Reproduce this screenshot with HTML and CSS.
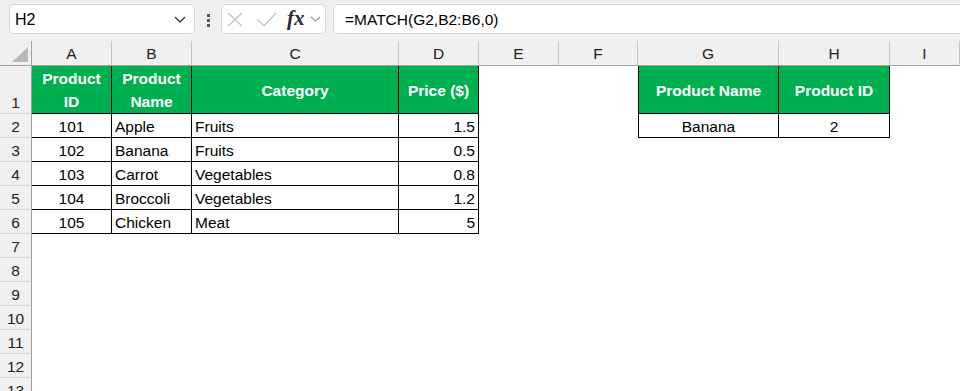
FILE: index.html
```html
<!DOCTYPE html>
<html lang="en">
<head>
  <meta charset="UTF-8" />
  <meta name="viewport" content="width=device-width, initial-scale=1.0"/>
  <title>MATCH lookup</title>
  <link rel="stylesheet" href="styles.css">
</head>
<body>

  <!-- Formula bar -->
  <div class="toolbar">
    <div class="name-box">
      <span>H2</span>
      <svg class="chev" width="12" height="7" viewBox="0 0 12 7"><path d="M1 1l5 5 5-5" fill="none" stroke="#333" stroke-width="1.3"/></svg>
    </div>
    <div class="dots"><i></i><i></i><i></i></div>
    <div class="fx-box">
      <svg class="cancel" width="16" height="15" viewBox="0 0 16 15"><path d="M1 1l14 13M15 1L1 14" stroke="#c2c2c2" stroke-width="1.2" fill="none"/></svg>
      <svg class="enter" width="21" height="15" viewBox="0 0 21 15"><path d="M1 7l7 7L20 1" stroke="#c2c2c2" stroke-width="1.2" fill="none"/></svg>
      <span class="fx">fx</span>
      <svg class="chev-sm" width="11" height="6" viewBox="0 0 11 6"><path d="M1 1l4.5 4 4.5-4" fill="none" stroke="#9a9a9a" stroke-width="1.1"/></svg>
    </div>
    <div class="formula">=MATCH(G2,B2:B6,0)</div>
  </div>

  <!-- Sheet -->
  <div class="sheet">
    <div class="row col-heads">
      <div class="corner"><svg width="16" height="15" viewBox="0 0 16 15"><path d="M16 0V15H0Z" fill="#b8b8b8"/></svg></div>
      <div>A</div><div>B</div><div>C</div><div>D</div><div>E</div><div>F</div><div>G</div><div>H</div><div>I</div>
    </div>

    <div class="row tall">
      <div class="rh">1</div>
      <div class="hd">Product ID</div>
      <div class="hd">Product Name</div>
      <div class="hd">Category</div>
      <div class="hd">Price ($)</div>
      <div></div><div></div>
      <div class="hd gl">Product Name</div>
      <div class="hd">Product ID</div>
    </div>

    <div class="row">
      <div class="rh">2</div>
      <div class="b ctr">101</div>
      <div class="b lt">Apple</div>
      <div class="b lt">Fruits</div>
      <div class="b rt">1.5</div>
      <div></div><div></div>
      <div class="b gl ctr">Banana</div>
      <div class="b ctr">2</div>
    </div>

    <div class="row">
      <div class="rh">3</div>
      <div class="b ctr">102</div>
      <div class="b lt">Banana</div>
      <div class="b lt">Fruits</div>
      <div class="b rt">0.5</div>
    </div>

    <div class="row">
      <div class="rh">4</div>
      <div class="b ctr">103</div>
      <div class="b lt">Carrot</div>
      <div class="b lt">Vegetables</div>
      <div class="b rt">0.8</div>
    </div>

    <div class="row">
      <div class="rh">5</div>
      <div class="b ctr">104</div>
      <div class="b lt">Broccoli</div>
      <div class="b lt">Vegetables</div>
      <div class="b rt">1.2</div>
    </div>

    <div class="row">
      <div class="rh">6</div>
      <div class="b ctr">105</div>
      <div class="b lt">Chicken</div>
      <div class="b lt">Meat</div>
      <div class="b rt">5</div>
    </div>

    <div class="row"><div class="rh">7</div></div>
    <div class="row"><div class="rh">8</div></div>
    <div class="row"><div class="rh">9</div></div>
    <div class="row"><div class="rh">10</div></div>
    <div class="row"><div class="rh">11</div></div>
    <div class="row"><div class="rh">12</div></div>
    <div class="row"><div class="rh">13</div></div>
  </div>

</body>
</html>
```

FILE: styles.css
```css
body {
  margin: 0;
  background-color: #fff;
  font-family: 'Liberation Sans', Arial, sans-serif;
  color: #000;
  overflow: hidden;
}

/* formula bar */
.toolbar {
  height: 41px;
  box-sizing: border-box;
  background-color: #f0f0f0;
  display: flex;
  align-items: flex-start;
  padding: 4px 0 0 9px;
}

.name-box {
  width: 186px;
  height: 30px;
  box-sizing: border-box;
  background-color: #fff;
  border: 1px solid #d6d6d6;
  border-radius: 5px;
  display: flex;
  align-items: center;
  justify-content: space-between;
  padding: 2px 8px 0 5px;
  font-size: 16px;
}

.name-box .chev {
  margin-top: -2px;
}

.dots {
  display: flex;
  flex-direction: column;
  gap: 2px;
  margin: 10px 0 0 12px;
}

.dots i {
  display: block;
  width: 3px;
  height: 3px;
  background-color: #555;
}

.fx-box {
  width: 105px;
  height: 30px;
  box-sizing: border-box;
  margin-left: 11px;
  background-color: #fff;
  border: 1px solid #d6d6d6;
  border-radius: 5px;
  display: flex;
  align-items: center;
  padding-left: 5px;
}

.fx-box .enter {
  margin-left: 13px;
}

.fx {
  margin-left: 10px;
  font-family: 'Liberation Serif', serif;
  font-style: italic;
  font-weight: bold;
  font-size: 21px;
  color: #2a2a2a;
  line-height: 1;
  margin-top: -2px;
}

.fx-box .chev-sm {
  margin-left: 5px;
}

.formula {
  flex: 1;
  height: 30px;
  box-sizing: border-box;
  margin: 0 -10px 0 7px;
  background-color: #fff;
  border: 1px solid #d6d6d6;
  border-radius: 5px 0 0 5px;
  padding: 6px 0 0 11px;
  font-size: 15.5px;
  line-height: 18px;
}

/* grid */
.row {
  display: grid;
  grid-template-columns: 32px 80px 80px 207px 80px 80px 79px 141px 111px 1fr;
  height: 24px;
}

.row.tall {
  height: 48px;
}

.row > div {
  box-sizing: border-box;
  display: flex;
  align-items: flex-end;
  line-height: 20px;
  font-size: 15.5px;
  white-space: nowrap;
  overflow: hidden;
}

.col-heads {
  height: 25px;
}

.col-heads > div {
  align-items: center;
  justify-content: center;
  padding-top: 2px;
  background-color: #f0f0f0;
  color: #222;
  border-right: 1px solid #c4c4c4;
  border-bottom: 1px solid #a0a0a0;
}

.col-heads .corner {
  align-items: flex-end;
  justify-content: flex-end;
  padding: 0 3px 3px 0;
  border-right-color: #a0a0a0;
}

.rh {
  justify-content: center;
  background-color: #f0f0f0;
  color: #222;
  border-right: 1px solid #a0a0a0;
  border-bottom: 1px solid #d4d4d4;
}

.row > .hd {
  align-items: center;
  justify-content: center;
  text-align: center;
  white-space: normal;
  line-height: 23px;
  padding: 1px 4px 0;
  background-color: #00b050;
  color: #fff;
  font-weight: bold;
  border-right: 1px solid #000;
  border-bottom: 1px solid #000;
}

.b {
  border-right: 1px solid #000;
  border-bottom: 1px solid #000;
}

.gl {
  border-left: 1px solid #000;
}

.ctr {
  justify-content: center;
}

.lt {
  padding-left: 3px;
}

.rt {
  justify-content: flex-end;
  padding-right: 3px;
}
```
